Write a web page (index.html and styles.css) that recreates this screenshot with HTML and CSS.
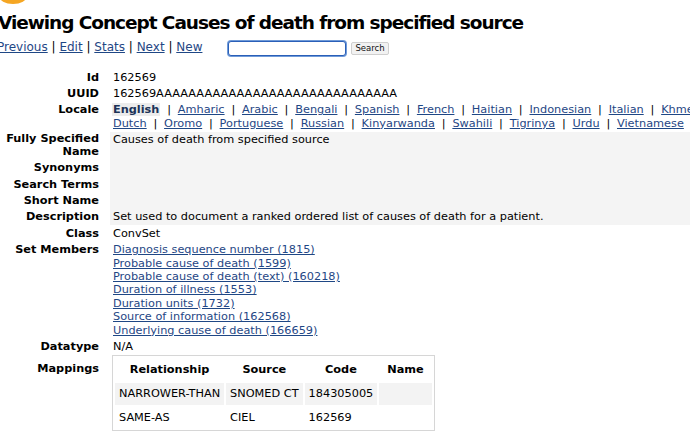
FILE: index.html
```html
<!DOCTYPE html>
<html>
<head>
<meta charset="utf-8">
<title>Viewing Concept</title>
<link rel="stylesheet" href="styles.css">
</head>
<body>
<div class="page">
  <div class="logo-strip"><span class="logo-dot"></span></div>
  <h1 class="title">Viewing Concept Causes of death from specified source</h1>
  <div class="nav">
    <div class="nav-links">
      <a href="#">Previous</a> | <a href="#">Edit</a> | <a href="#">Stats</a> | <a href="#">Next</a> | <a href="#">New</a>
    </div>
    <form class="search">
      <input class="search-input" type="text">
      <button class="search-btn" type="button">Search</button>
    </form>
  </div>

  <div class="details">
    <div class="row"><div class="label">Id</div><div class="value">162569</div></div>
    <div class="row"><div class="label">UUID</div><div class="value">162569AAAAAAAAAAAAAAAAAAAAAAAAAAAAAA</div></div>
    <div class="row"><div class="label">Locale</div>
      <div class="value locales">
        <div class="locale-line"><span class="locale-current">English</span>|<a href="#">Amharic</a>|<a href="#">Arabic</a>|<a href="#">Bengali</a>|<a href="#">Spanish</a>|<a href="#">French</a>|<a href="#">Haitian</a>|<a href="#">Indonesian</a>|<a href="#">Italian</a>|<a href="#">Khmer</a>|<a href="#">Nepali</a></div>
        <div class="locale-line"><a href="#">Dutch</a>|<a href="#">Oromo</a>|<a href="#">Portuguese</a>|<a href="#">Russian</a>|<a href="#">Kinyarwanda</a>|<a href="#">Swahili</a>|<a href="#">Tigrinya</a>|<a href="#">Urdu</a>|<a href="#">Vietnamese</a></div>
      </div>
    </div>
    <div class="row shaded"><div class="label tight">Fully Specified Name</div><div class="value">Causes of death from specified source</div></div>
    <div class="row shaded"><div class="label">Synonyms</div><div class="value"></div></div>
    <div class="row shaded"><div class="label">Search Terms</div><div class="value"></div></div>
    <div class="row shaded"><div class="label">Short Name</div><div class="value"></div></div>
    <div class="row shaded"><div class="label">Description</div><div class="value">Set used to document a ranked ordered list of causes of death for a patient.</div></div>
    <div class="row"><div class="label">Class</div><div class="value">ConvSet</div></div>
    <div class="row"><div class="label">Set Members</div>
      <div class="value members">
        <a href="#">Diagnosis sequence number (1815)</a>
        <a href="#">Probable cause of death (1599)</a>
        <a href="#">Probable cause of death (text) (160218)</a>
        <a href="#">Duration of illness (1553)</a>
        <a href="#">Duration units (1732)</a>
        <a href="#">Source of information (162568)</a>
        <a href="#">Underlying cause of death (166659)</a>
      </div>
    </div>
    <div class="row"><div class="label">Datatype</div><div class="value">N/A</div></div>
    <div class="row mappings-row"><div class="label">Mappings</div>
      <div class="value">
        <table class="mappings">
          <thead>
            <tr><th>Relationship</th><th>Source</th><th>Code</th><th>Name</th></tr>
          </thead>
          <tbody>
            <tr class="odd"><td>NARROWER-THAN</td><td>SNOMED CT</td><td>184305005</td><td></td></tr>
            <tr><td>SAME-AS</td><td>CIEL</td><td>162569</td><td></td></tr>
          </tbody>
        </table>
      </div>
    </div>
  </div>
</div>
</body>
</html>
```

FILE: styles.css
```css
html, body {
  margin: 0;
  padding: 0;
  background: #ffffff;
  overflow: hidden;
}

body {
  font-family: "DejaVu Sans", Verdana, sans-serif;
  font-size: 11.3px;
  line-height: 13.4px;
  color: #000000;
}

a {
  color: #1f4785;
  text-decoration: underline;
}

.page {
  margin-left: -4px;
  width: 900px;
}

.logo-strip {
  height: 4px;
  overflow: hidden;
}

.logo-dot {
  display: block;
  width: 28px;
  height: 16px;
  margin-top: -12px;
  margin-left: 3px;
  border-radius: 50%;
  background: #f5a623;
}

.title {
  margin: 8px 0 0 2px;
  font-size: 18.5px;
  line-height: 22px;
  font-weight: bold;
  letter-spacing: -1.05px;
  white-space: nowrap;
}

.nav {
  display: flex;
  align-items: center;
  margin-top: 6px;
  height: 16px;
  font-size: 12px;
}

.nav-links {
  white-space: nowrap;
  margin-left: 1px;
}

.search {
  display: flex;
  align-items: center;
  margin: 0 0 0 26px;
}

.search-input {
  width: 114px;
  height: 11px;
  padding: 1px;
  margin: 0;
  border: 1px solid #2a5fb8;
  border-radius: 3px;
  box-shadow: 0 0 0 1px #6f9ad8;
  font-size: 10px;
}

.search-btn {
  margin-left: 5px;
  height: 13px;
  padding: 0 3px;
  font-family: "DejaVu Sans", Verdana, sans-serif;
  font-size: 8.5px;
  line-height: 11px;
  background: #f2f2f2;
  border: 1px solid #cfcfcf;
  border-radius: 2px;
  color: #111;
}

.details {
  margin-top: 13px;
}

.row {
  display: grid;
  grid-template-columns: 103px 1fr;
  column-gap: 11px;
}

.label {
  font-weight: bold;
  text-align: right;
  padding: 1.5px 0;
}

.label.tight {
  line-height: 12.5px;
}

.value {
  padding: 1.5px 3px;
}

.row.shaded .value {
  background: #f4f4f4;
}

.locale-line {
  white-space: nowrap;
}

.locale-line a,
.locale-line .locale-current {
  margin: 0 6.8px;
}

.locale-line > :first-child {
  margin-left: 0;
}

.locale-current {
  font-weight: bold;
  color: #1c3358;
  background: #ececec;
  padding: 0 1px;
}

.locale-line > .locale-current:first-child {
  margin-left: -1px;
}

.members a {
  display: block;
  width: max-content;
}

.mappings-row .label {
  padding-top: 7px;
}

.mappings-row .value {
  padding: 0 0 0 2px;
}

.mappings {
  border: 1px solid #d6d6d6;
  border-spacing: 2px;
  font-size: 11.3px;
}

.mappings th {
  font-weight: bold;
  text-align: center;
  padding: 5px 8px;
  line-height: 13.4px;
}

.mappings td {
  padding: 4px 4px;
  line-height: 13.4px;
  white-space: nowrap;
}

.mappings tr.odd td {
  background: #f3f3f3;
}
```
